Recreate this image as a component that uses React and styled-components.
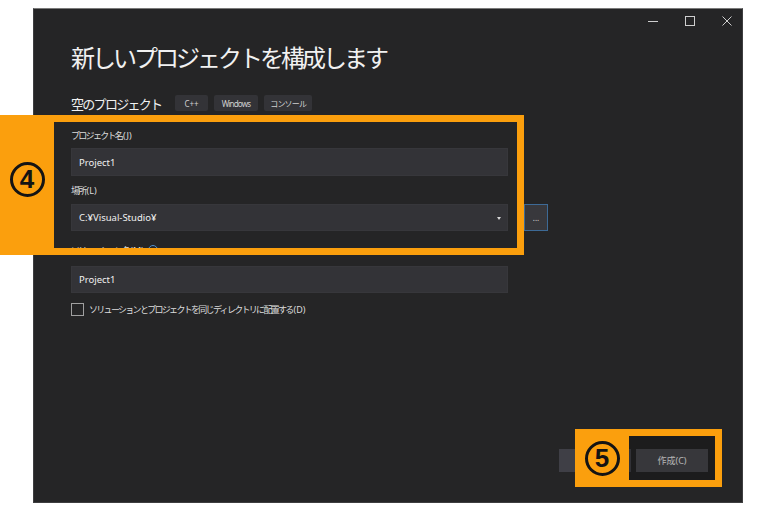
import styled, { createGlobalStyle } from 'styled-components';

const GlobalStyle = createGlobalStyle`
  html, body {
    margin: 0;
    background: #ffffff;
  }
  * {
    box-sizing: border-box;
  }
`

const ORANGE = '#fb9f0d';
const UI_FONT = `"Noto Sans", "Noto Sans CJK JP", sans-serif`;

const Page = styled.div`
  position: relative;
  width: 760px;
  height: 511px;
  padding: 8px 0 0 33px;
  overflow: hidden;
  font-family: ${UI_FONT};
`

const Window = styled.div`
  width: 710px;
  height: 495px;
  display: flex;
  flex-direction: column;
  background: #252526;
  border: 1px solid #3e3e40;
  border-top-color: #7a7a7a;
`

const TitleBar = styled.div`
  height: 24px;
  display: flex;
  align-items: center;
  justify-content: flex-end;
  gap: 27px;
  padding-right: 10px;
  color: #cfcfcf;
`

const Content = styled.div`
  flex: 1;
  display: flex;
  flex-direction: column;
  padding-left: 37px;
`

const Title = styled.h1`
  margin: 9px 0 0;
  font-family: "Noto Sans CJK JP", sans-serif;
  font-weight: 400;
  font-size: 24px;
  line-height: 30px;
  letter-spacing: -3px;
  color: #f1f1f1;
`

const SubRow = styled.div`
  margin-top: 23px;
  height: 16px;
  display: flex;
  align-items: center;
  gap: 6px;
`

const Template = styled.span`
  font-family: "Noto Sans CJK JP", sans-serif;
  font-size: 13px;
  letter-spacing: -1.7px;
  color: #f1f1f1;
  margin-right: 8px;
`

const Tag = styled.span`
  height: 16px;
  padding: 0 ${p => p.$pad || 6}px;
  display: inline-flex;
  align-items: center;
  background: #333337;
  border-radius: 2px;
  font-size: 8px;
  color: #d0d0d0;
  letter-spacing: ${p => p.$tight ? '-0.8px' : '0'};
`

const Label = styled.div`
  margin-top: ${p => p.$top}px;
  height: 14px;
  display: flex;
  align-items: center;
  font-size: 9px;
  letter-spacing: -1.7px;
  color: #dcdcdc;
`

const Key = styled.span`
  letter-spacing: 0;
  margin-left: 1px;
`

const InfoIcon = styled.span`
  width: 10px;
  height: 10px;
  margin-left: 4px;
  border: 1px solid #4f8fcf;
  border-radius: 50%;
`

const FieldRow = styled.div`
  margin-top: ${p => p.$top}px;
  display: flex;
  gap: 16px;
`

const Input = styled.div`
  position: relative;
  width: 437px;
  height: ${p => p.$h || 27}px;
  display: flex;
  align-items: center;
  padding-left: 7px;
  background: #333337;
  border: 1px solid #37373b;
  font-size: 9.5px;
  color: #f1f1f1;
`

const Caret = styled.span`
  position: absolute;
  right: 6px;
  top: 12px;
  border-left: 2.5px solid transparent;
  border-right: 2.5px solid transparent;
  border-top: 3px solid #d8d8d8;
`

const BrowseButton = styled.div`
  width: 24px;
  height: 27px;
  display: flex;
  align-items: flex-end;
  justify-content: center;
  padding-bottom: 8px;
  background: #38383c;
  border: 1px solid #3d6a96;
  font-size: 8px;
  line-height: 8px;
  color: #d8d8d8;
`

const CheckRow = styled.label`
  margin-top: 10px;
  display: flex;
  align-items: center;
  font-size: 9px;
  letter-spacing: -1.7px;
  color: #dcdcdc;
`

const CheckBox = styled.span`
  width: 13px;
  height: 13px;
  margin-right: 5px;
  border: 1px solid #a0a0a0;
`

const Footer = styled.div`
  margin-top: auto;
  padding: 0 34px 30px 0;
  display: flex;
  justify-content: flex-end;
  gap: 5px;
`

const Button = styled.div`
  width: 72px;
  height: 23px;
  display: flex;
  align-items: center;
  justify-content: center;
  background: ${p => p.$primary ? '#47474c' : '#3f3f46'};
  font-size: 9px;
  color: #e6e6e6;
`

const Callout = styled.div`
  position: absolute;
  left: ${p => p.$x}px;
  top: ${p => p.$y}px;
  width: ${p => p.$w}px;
  height: ${p => p.$h}px;
  display: flex;
  pointer-events: none;
`

const CalloutTab = styled.div`
  width: 54px;
  display: flex;
  align-items: center;
  justify-content: center;
  background: ${ORANGE};
  padding-bottom: ${p => p.$lift || 0}px;
`

const Number = styled.span`
  width: 35px;
  height: 35px;
  display: flex;
  align-items: center;
  justify-content: center;
  border: 3px solid #141414;
  border-radius: 50%;
  font-family: "Liberation Sans", sans-serif;
  font-weight: 700;
  font-size: 26px;
  color: #141414;
`

const CalloutFrame = styled.div`
  flex: 1;
  border: 7px solid ${ORANGE};
  border-left: 0;
  background: ${p => p.$shade ? 'rgba(0, 0, 0, 0.22)' : 'transparent'};
`

const WindowIcon = ({ type }) => (
  <svg width="10" height="10" viewBox="0 0 10 10" fill="none" stroke="currentColor" strokeWidth="1">
    {type === 'min' && <path d="M0 5.5h10" />}
    {type === 'max' && <rect x="0.5" y="0.5" width="9" height="9" />}
    {type === 'close' && <path d="M0.5 0.5l9 9M9.5 0.5l-9 9" />}
  </svg>
)

function App() {
  return (
    <Page>
      <GlobalStyle />
      <Window>
        <TitleBar>
          <WindowIcon type="min" />
          <WindowIcon type="max" />
          <WindowIcon type="close" />
        </TitleBar>
        <Content>
          <Title>新しいプロジェクトを構成します</Title>
          <SubRow>
            <Template>空のプロジェクト</Template>
            <Tag $pad={9}>C++</Tag>
            <Tag $pad={8} $tight>Windows</Tag>
            <Tag $pad={6} $tight>コンソール</Tag>
          </SubRow>

          <Label $top={17}>プロジェクト名<Key>(J)</Key></Label>
          <FieldRow $top={6}>
            <Input $h={28}>Project1</Input>
          </FieldRow>

          <Label $top={7}>場所<Key>(L)</Key></Label>
          <FieldRow $top={7}>
            <Input>
              C:¥Visual-Studio¥
              <Caret />
            </Input>
            <BrowseButton>...</BrowseButton>
          </FieldRow>

          <Label $top={12}>
            ソリューション名<Key>(M)</Key>
            <InfoIcon />
          </Label>
          <FieldRow $top={9}>
            <Input>Project1</Input>
          </FieldRow>

          <CheckRow>
            <CheckBox />
            ソリューションとプロジェクトを同じディレクトリに配置する<Key>(D)</Key>
          </CheckRow>

          <Footer>
            <Button />
            <Button $primary>作成(C)</Button>
          </Footer>
        </Content>
      </Window>

      <Callout $x={0} $y={115} $w={524} $h={140}>
        <CalloutTab $lift={12}>
          <Number>4</Number>
        </CalloutTab>
        <CalloutFrame />
      </Callout>

      <Callout $x={575} $y={429} $w={147} $h={58}>
        <CalloutTab>
          <Number>5</Number>
        </CalloutTab>
        <CalloutFrame $shade />
      </Callout>
    </Page>
  )
}

export default App
